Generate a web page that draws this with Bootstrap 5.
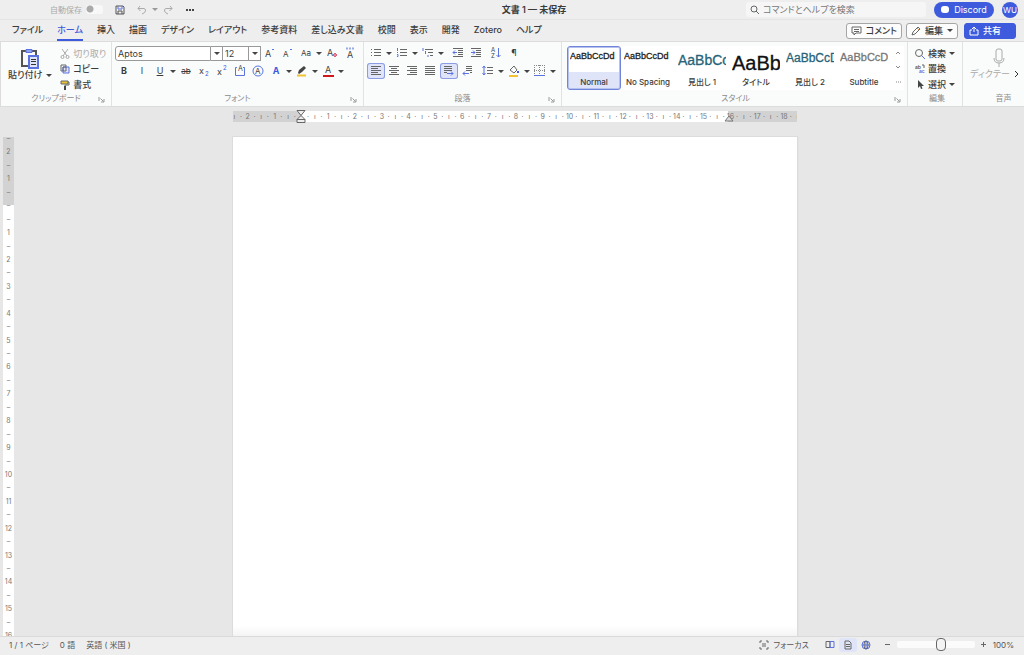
<!DOCTYPE html>
<html lang="ja">
<head>
<meta charset="utf-8">
<meta name="viewport" content="width=device-width, initial-scale=1">
<title>文書 1 — 未保存</title>
<link href="https://cdn.jsdelivr.net/npm/bootstrap@5.3.0/dist/css/bootstrap.min.css" rel="stylesheet">
<style>
:root { --accent:#3d5bdc; --ink:#3b3b3b; --soft:#8b8b8b; --tint:#dfe4f8; }
body { font-family:Inter,"Noto Sans CJK JP",sans-serif; font-size:9px; line-height:12px; font-feature-settings:"palt"; color:var(--ink); background:#eee; }
button { font:inherit; font-feature-settings:inherit; color:inherit; background:none; border:0; padding:0; white-space:nowrap; }
svg { fill:none; stroke:#666; stroke-width:1; flex:none; display:block; }
svg text { stroke:none; fill:#444; }
.b { stroke:#5a73e0; } .fb { fill:var(--accent)!important; stroke:none; } .fk { fill:#444; stroke:none; }
.faded { color:#aaa; } .faded svg { stroke:#aaa; }
.titlebar { height:20px; padding:0 6px 0 50px; border-bottom:1px solid #e4e4e4; }
.side { flex:1 1 0; min-width:0; }
.small-text { font-size:8px; }
.auto-switch.form-check-input { width:17px; height:9px; margin:0; border:0; background-color:#f8f8f8; background-image:radial-gradient(circle at 4px 4px,#aaa 3px,transparent 4px); }
.search-box { width:180px; height:15px; background:#f6f6f6; border-radius:3px; }
.search-box input { border:0; background:none; padding:0; outline:0; width:150px; font:inherit; font-feature-settings:inherit; height:12px; }
.search-box input::placeholder { color:#777; opacity:1; }
.pill { width:60px; height:16px; border-radius:8px; background:var(--accent); color:#fff; }
.avatar { width:16px; height:16px; border-radius:50%; background:var(--accent); color:#fff; font-size:8px; }
.tabrow { height:21px; padding:0 8px 0 12px; }
.tabrow .tabs { gap:14px; }
.tabrow .tabs a { color:var(--ink); text-decoration:none; white-space:nowrap; padding:4px 0 3px; border-bottom:2px solid transparent; font-weight:500; }
.tabrow .tabs a.active { color:var(--accent); border-color:var(--accent); }
.action { height:16px; border:1px solid #a5a5a5; border-radius:3px; background:#fcfcfc; font-weight:500; }
.action.share { background:var(--accent); border-color:var(--accent); color:#fff; width:52px; margin-left:2px; }
.action.share svg { stroke:#fff; }
.ribbon { height:66px; background:#fafbfb; border:1px solid #dcdcdc; border-width:1px 0 1px 1px; }
.group { border-right:1px solid #e2e2e2; padding:2px 3px 0; position:relative; display:flex; flex-direction:column; flex:none; }
.group .foot { margin-top:auto; height:14px; text-align:center; font-size:8px; color:var(--soft); padding-bottom:2px; }
.launch { position:absolute; right:6px; bottom:3px; }
.rows { padding-top:2px; }
.rows button { gap:3px; }
.tool { width:18px; height:16px; display:flex; align-items:center; justify-content:center; border-radius:3px; flex:none; }
.tool.on { background:var(--tint); box-shadow:inset 0 0 0 1px #8b9be4; }
.caret { width:8px; height:16px; display:flex; align-items:center; justify-content:center; flex:none; }
.caret::before, .tri::after { content:""; border:3px solid transparent; border-top:3px solid #444; border-bottom:0; }
.toolrow { height:18px; display:flex; align-items:center; }
.field { height:15px; border:1px solid #999; border-radius:3px 0 0 3px; background:#fff; padding:0 2px; font:inherit; color:inherit; outline:0; }
.field + .caret { height:15px; width:12px; border:1px solid #999; border-left:0; background:#fff; }
.gallery { background:#fff; height:44px; margin-top:2px; }
.style-item { width:54px; height:44px; border-radius:3px; padding:2px 2px 0; display:flex; flex-direction:column; overflow:hidden; font-size:8px; border:1px solid transparent; }
.style-item > span { width:100%; flex:none; }
.style-item .sample { font-family:"Liberation Sans",sans-serif; text-align:left; overflow:hidden; height:27px; line-height:14px; font-size:9px; color:#222; -webkit-text-stroke:.3px currentColor; }
.style-item .s14 { font-size:14px; line-height:22px; color:#276479; } .style-item .s20 { font-size:20px; line-height:29px; color:#111; }
.style-item .s12 { font-size:12px; line-height:18px; color:#276479; } .style-item .s11 { font-size:11px; line-height:17px; color:#777; }
.style-item.on { border:1px solid #7184dc; background:linear-gradient(#fff 25px,var(--tint) 25px); box-shadow:0 0 0 1px #b7c1ee inset; }
.work { background:#e7e7e7; min-height:0; flex:1 1 0; }
.hruler { width:564px; height:11px; overflow:hidden; font-size:7px; line-height:11px; color:#777; background:linear-gradient(90deg,#d2d2d2 68px,#fff 68px 495px,#d2d2d2 495px); }
.hruler .ticks { margin:0 -4px 0 -2px; }
.hruler .ticks span { flex:1 1 0; width:0; display:flex; justify-content:center; }
.ruler-mark { position:absolute; top:-1px; }
.vruler { width:11px; margin:30px 0 0 3px; overflow:hidden; font-size:7px; background:linear-gradient(#d2d2d2 68px,#fff 68px); color:#777; }
.vruler .ticks { height:806px; margin-top:-5px; }
.vruler .ticks span { flex:1 1 0; min-height:0; text-align:center; line-height:13px; }
.sheet { width:564px; background:linear-gradient(transparent calc(100% - 10px),#f4f4f4),#fff; box-shadow:0 0 0 1px #dcdcdc,1px 0 1px #ccc; }
.status { height:19px; font-size:8px; padding:0 10px 3px 9px; border-top:1px solid #dadada; color:#555; }
.status .tool { height:14px; }
.zoom-range { appearance:none; width:78px; height:14px; background:none; margin:0; }
.zoom-range::-webkit-slider-runnable-track { height:7px; background:#fbfbfb; border-radius:2px; }
.zoom-range::-webkit-slider-thumb { appearance:none; width:10px; height:13px; margin-top:-3px; border:1px solid #666; border-radius:4px; background:#f4f4f4; }
</style>
</head>
<body>
<div class="d-flex flex-column vh-100 overflow-hidden">

<header class="titlebar d-flex align-items-center flex-shrink-0">
  <div class="side d-flex align-items-center faded">
    <label for="autosave" class="small-text">自動保存</label>
    <input id="autosave" type="checkbox" role="switch" class="form-check-input auto-switch ms-1">
    <button class="tool ms-2" aria-label="保存"><svg width="10" height="10" viewBox="0 0 10 10" style="stroke:#555"><path d="M1 1h7l1 1v7H1z"/><path class="b" d="M3 1v3h4V1"/><path d="M3 9V6h4v3"/></svg></button>
    <button class="tool ms-1" aria-label="元に戻す"><svg width="10" height="10" viewBox="0 0 10 10"><path d="M3 1L1 3.500L3.500 6M1 3.500H7Q9 4 8.500 6T5 9"/></svg></button>
    <button class="caret opacity-50" aria-label="履歴"></button>
    <button class="tool" aria-label="やり直し"><svg width="10" height="10" viewBox="0 0 10 10"><path d="M7 1l2 2.500L6.500 6M9 3.500H3Q1 4 1.500 6T5 9"/></svg></button>
    <button class="tool ms-1" aria-label="その他"><svg width="10" height="4"><path class="fk" d="M1 1h2v2H1zM4 1h2v2H4zM7 1h2v2H7z"/></svg></button>
  </div>
  <div class="fw-semibold text-nowrap">文書 1 — 未保存</div>
  <div class="side d-flex align-items-center justify-content-end gap-2">
    <div class="search-box d-flex align-items-center">
      <svg class="mx-1" width="9" height="9"><circle cx="4" cy="4" r="3"/><path d="M6 6l3 3"/></svg>
      <input type="search" aria-label="検索" placeholder="コマンドとヘルプを検索">
    </div>
    <button class="pill d-flex align-items-center justify-content-center gap-1"><svg width="9" height="9"><rect x="0" y="1" width="8" height="7" rx="3" style="fill:#fff;stroke:none"/></svg>Discord</button>
    <button class="avatar">WU</button>
  </div>
</header>

<div class="tabrow d-flex align-items-center justify-content-between flex-shrink-0">
  <nav class="tabs d-flex">
    <a href="#">ファイル</a><a href="#" class="active">ホーム</a><a href="#">挿入</a><a href="#">描画</a><a href="#">デザイン</a><a href="#">レイアウト</a><a href="#">参考資料</a><a href="#">差し込み文書</a><a href="#">校閲</a><a href="#">表示</a><a href="#">開発</a><a href="#">Zotero</a><a href="#">ヘルプ</a>
  </nav>
  <div class="d-flex gap-1">
    <button class="action px-1 d-flex align-items-center gap-1"><svg width="11" height="10"><path d="M1 1h9v6H5L3 9V7H1zM3 3.500h5M3 5.500h5"/></svg>コメント</button>
    <button class="action tri px-1 d-flex align-items-center gap-1"><svg width="10" height="10"><path d="M1 9l1-3 5-5 2 2-5 5z"/><path d="M6 2l2 2" stroke="#e0a040"/></svg>編集</button>
    <button class="action share px-1 d-flex align-items-center gap-1"><svg width="10" height="10"><path d="M3 4H1v5h8V4H7M5 6V1M3 3l2-2 2 2"/></svg>共有</button>
  </div>
</div>

<main class="ribbon d-flex overflow-hidden flex-shrink-0">
  <section class="group" style="width:111px">
    <div class="d-flex">
      <button class="d-flex flex-column align-items-center ms-1 me-2 pt-1 fw-medium">
        <svg width="20" height="21" viewBox="0 0 20 21"><path d="M6 3H2v15h6M12 3h4v4" stroke-width="2" stroke="#555"/><path class="b" d="M6 1.500h6v3H6z" fill="#8fa3ee"/><path class="b" d="M9 8h9v12H9z" fill="#dfe4f8" stroke-width="2"/><path d="M11 11.500h5M11 13.500h5M11 16.500h5" stroke="#333"/></svg>
        <span class="tri d-flex align-items-center gap-1">貼り付け</span></button>
      <div class="d-flex flex-column rows">
        <button class="faded d-flex align-items-center" style="height:15px"><svg width="10" height="10"><circle cx="2.500" cy="8" r="1.500"/><circle cx="7.500" cy="8" r="1.500"/><path d="M3 7l5-7M7 7L2 0"/></svg>切り取り</button>
        <button class="d-flex align-items-center fw-medium" style="height:16px"><svg width="10" height="10"><path d="M3 7H1V1h5v2"/><path class="b" d="M3 3h6v6H3z" fill="#dfe4f8"/><path d="M3 3h3v4H3z"/></svg>コピー</button>
        <button class="d-flex align-items-center fw-medium" style="height:15px"><svg width="10" height="10"><path d="M1 1h7v3H1z" fill="#e7c535"/><path d="M8 2h1v3H5v1"/><path class="fk" d="M4 6h2v4H4z"/></svg>書式</button>
      </div>
    </div>
    <div class="foot">クリップボード</div><button class="launch" aria-label="クリップボードの設定"><svg width="7" height="7"><path d="M1 5V1M2.500 2.500l3 3M6 3v3H3" stroke="#999"/></svg></button>
  </section>

  <section class="group" style="width:252px">
    <div class="toolrow">
      <input class="field" style="width:96px" aria-label="フォント" value="Aptos"><button class="caret" aria-label="フォント一覧"></button>
      <input class="field rounded-0 border-start-0" style="width:26px" aria-label="サイズ" value="12"><button class="caret" aria-label="サイズ一覧"></button>
      <button class="tool" aria-label="拡大"><svg width="12" height="12"><text x="1" y="10" font-size="9">A</text><path class="b" d="M8 3l1-1 1 1"/></svg></button>
      <button class="tool" aria-label="縮小"><svg width="12" height="12"><text x="1" y="10" font-size="8">A</text><path class="b" d="M8 2l1 1 1-1"/></svg></button>
      <button class="tool small-text">Aa</button><button class="caret" aria-label="文字種"></button>
      <button class="tool" aria-label="書式のクリア"><svg width="12" height="12"><text x="1" y="9" font-size="9">A</text><path d="M7 8l2-2 2 2-2 2z" style="fill:#e78798;stroke:#d86078"/></svg></button>
      <button class="tool" aria-label="ルビ"><svg width="12" height="12"><path class="b" d="M2 1.500h8" stroke-width="2" stroke-dasharray="2 1" stroke-opacity=".6"/><text x="3" y="11" font-size="9">A</text></svg></button>
    </div>
    <div class="toolrow">
      <button class="tool fw-bold">B</button><button class="tool">I</button><button class="tool text-decoration-underline">U</button><button class="caret" aria-label="下線"></button>
      <button class="tool text-decoration-line-through small-text">ab</button>
      <button class="tool" aria-label="下付き"><svg width="12" height="12"><text x="1" y="9" font-size="9">x</text><text class="fb" x="7" y="11" font-size="6">2</text></svg></button>
      <button class="tool" aria-label="上付き"><svg width="12" height="12"><text x="1" y="10" font-size="9">x</text><text class="fb" x="7" y="5" font-size="6">2</text></svg></button>
      <button class="tool" aria-label="囲み線"><svg width="12" height="12"><path class="b" d="M3 2.500H1.500v8h9v-8H9"/><text x="4" y="6" font-size="7">A</text></svg></button>
      <button class="tool" aria-label="囲い文字"><svg width="12" height="12"><circle class="b" cx="6" cy="6" r="5"/><text x="3" y="9" font-size="8">A</text></svg></button>
      <button class="tool fw-bold" style="color:var(--accent)">A</button><button class="caret" aria-label="文字の効果"></button>
      <button class="tool" aria-label="蛍光ペン"><svg width="12" height="12"><path class="fk" d="M2 8l1-3 5-4 2 2-4 4-3 2z"/><path d="M1 10.500h9" stroke="#f1c232" stroke-width="2"/></svg></button><button class="caret" aria-label="蛍光ペンの色"></button>
      <button class="tool" aria-label="フォントの色"><svg width="12" height="12"><text x="3" y="8" font-size="9">A</text><path d="M1 11h11" stroke="#d01818" stroke-width="2"/></svg></button><button class="caret" aria-label="色"></button>
    </div>
    <div class="foot">フォント</div><button class="launch" aria-label="フォントの設定"><svg width="7" height="7"><path d="M1 5V1M2.500 2.500l3 3M6 3v3H3" stroke="#999"/></svg></button>
  </section>

  <section class="group" style="width:198px">
    <div class="toolrow">
      <button class="tool" aria-label="箇条書き"><svg width="12" height="10"><path d="M4 1.500h7M4 4.500h7M4 7.500h7"/><path d="M1 1.500h1M1 4.500h1M1 7.500h1"/></svg></button><button class="caret" aria-label="行頭文字"></button>
      <button class="tool" aria-label="段落番号"><svg width="12" height="10"><path d="M4 1.500h7M4 4.500h7M4 7.500h7"/><path class="b" d="M1.500 0v3M1 4.500h1M1 6.500h1v2H1"/></svg></button><button class="caret" aria-label="番号の形式"></button>
      <button class="tool" aria-label="アウトライン"><svg width="12" height="10"><path d="M3 1.500h8M6 4.500h5M8 7.500h3"/><path class="b" d="M1 0v3M3.500 3v3M6 7v2"/></svg></button><button class="caret" aria-label="リスト"></button>
      <button class="tool ms-1" aria-label="インデントを減らす"><svg width="12" height="10"><path d="M1 .5h10M6 2.500h5M6 4.500h5M6 6.500h5M1 8.500h10"/><path class="b" d="M5 4.500H1M3 2.500l-2 2 2 2"/></svg></button>
      <button class="tool" aria-label="インデントを増やす"><svg width="12" height="10"><path d="M1 .5h10M6 2.500h5M6 4.500h5M6 6.500h5M1 8.500h10"/><path class="b" d="M1 4.500h4M3 2.500l2 2-2 2"/></svg></button>
      <button class="tool" style="margin-left:2px" aria-label="並べ替え"><svg width="12" height="12"><text x="1" y="5" font-size="6">A</text><text x="1" y="11" font-size="6">Z</text><path class="b" d="M8.500 1v9M6.500 8l2 2 2-2"/></svg></button>
      <button class="tool">¶</button>
    </div>
    <div class="toolrow">
      <button class="tool on" aria-label="左揃え"><svg width="10" height="10"><path d="M0 .5h10M0 2.500h7M0 4.500h10M0 6.500h7M0 8.500h10"/></svg></button>
      <button class="tool" aria-label="中央揃え"><svg width="10" height="10"><path d="M0 .5h10M2 2.500h6M0 4.500h10M2 6.500h6M0 8.500h10"/></svg></button>
      <button class="tool" aria-label="右揃え"><svg width="10" height="10"><path d="M0 .5h10M3 2.500h7M0 4.500h10M3 6.500h7M0 8.500h10"/></svg></button>
      <button class="tool" aria-label="両端揃え"><svg width="10" height="10"><path d="M0 .5h10M0 2.500h10M0 4.500h10M0 6.500h10M0 8.500h10"/></svg></button>
      <button class="tool on" style="margin-left:1px" aria-label="左から右"><svg width="12" height="12"><path d="M1 1.500h8M1 3.500h8M1 5.500h8M1 7.500h3"/><path class="b" d="M4 8.500h6M8 6.500l2 2-2 2"/></svg></button>
      <button class="tool" style="margin-left:1px" aria-label="右から左"><svg width="12" height="12"><path d="M4 1.500h6M4 3.500h6M4 5.500h6M8 7.500h2"/><path class="b" d="M7 8.500H1M3 6.500l-2 2 2 2"/></svg></button>
      <button class="tool" style="margin-left:2px" aria-label="行間"><svg width="12" height="12"><path d="M5 2.500h6M5 5.500h6M5 8.500h6"/><path class="b" d="M2 1v9M.5 3L2 1l1.500 2M.5 8L2 10l1.500-2"/></svg></button><button class="caret" aria-label="行間の設定"></button>
      <button class="tool" aria-label="塗りつぶし"><svg width="12" height="12"><path d="M2 5l4-4 3 4-3 3z"/><path class="fb" d="M9 6h2v2H9z"/><path d="M1 11h9" stroke="#f1c232" stroke-width="2"/></svg></button><button class="caret" aria-label="塗りつぶしの色"></button>
      <button class="tool" aria-label="罫線"><svg width="12" height="12"><path d="M.5 0v10M5.500 0v10M10.500 0v10M0 .5h11M0 5.500h11" stroke-dasharray="1 1" stroke="#888"/><path class="b" d="M0 10.500h11"/></svg></button><button class="caret" aria-label="罫線の種類"></button>
    </div>
    <div class="foot">段落</div><button class="launch" aria-label="段落の設定"><svg width="7" height="7"><path d="M1 5V1M2.500 2.500l3 3M6 3v3H3" stroke="#999"/></svg></button>
  </section>

  <section class="group" style="width:346px;padding-left:5px">
    <div class="gallery d-flex">
      <button class="style-item on"><span class="sample">AaBbCcDd</span><span class="fw-medium">Normal</span></button>
      <button class="style-item"><span class="sample">AaBbCcDd</span><span class="fw-medium">No Spacing</span></button>
      <button class="style-item"><span class="sample s14">AaBbCc</span><span class="fw-medium">見出し 1</span></button>
      <button class="style-item"><span class="sample s20">AaBb</span><span class="fw-medium">タイトル</span></button>
      <button class="style-item"><span class="sample s12">AaBbCcD</span><span class="fw-medium">見出し 2</span></button>
      <button class="style-item"><span class="sample s11">AaBbCcD</span><span class="fw-medium">Subtitle</span></button>
      <button class="d-flex flex-fill justify-content-center pt-1" aria-label="その他のスタイル"><svg width="8" height="36"><path d="M2 4l2-2 2 2M2 16l2 2 2-2M2 32h1M4 32h1M6 32h1" stroke="#888"/></svg></button>
    </div>
    <div class="foot">スタイル</div><button class="launch" aria-label="スタイルの設定"><svg width="7" height="7"><path d="M1 5V1M2.500 2.500l3 3M6 3v3H3" stroke="#999"/></svg></button>
  </section>

  <section class="group" style="width:55px;padding-left:7px">
    <div class="rows d-flex flex-column">
    <button class="tri d-flex align-items-center fw-medium" style="height:15px"><svg width="10" height="10"><circle cx="4" cy="4" r="3.500"/><path class="b" d="M6.500 6.500L10 10"/></svg>検索</button>
    <button class="d-flex align-items-center fw-medium" style="height:16px"><svg width="10" height="10"><text x="0" y="5" font-size="5">ab</text><path d="M7 1h2v3"/><text class="fb" x="4" y="9" font-size="5">ac</text></svg>置換</button>
    <button class="tri d-flex align-items-center fw-medium" style="height:15px"><svg width="10" height="10"><path class="fk" d="M3 0v8l2-2 1 3 1.500-.5L6.500 6H9z"/></svg>選択</button>
    </div>
    <div class="foot">編集</div>
  </section>

  <section class="group flex-fill border-0" style="padding-left:7px">
    <button class="faded d-flex flex-column align-items-start pt-1"><svg style="margin-left:22px" width="14" height="20"><rect x="4" y="1" width="6" height="12" rx="2"/><path d="M2 10q0 5 5 5t5-5M7 15v4"/></svg>
    <span class="d-flex align-items-center gap-1">ディクテー<svg width="5" height="8"><path d="M1 1l3 3-3 3" style="stroke:#333"/></svg></span></button>
    <div class="foot ps-3">音声</div>
  </section>
</main>

<div class="work d-flex">
  <div class="vruler"><div class="ticks d-flex flex-column" id="vticks"></div></div>
  <div class="flex-fill d-flex flex-column align-items-center pe-2">
    <div class="position-relative" style="margin:4px 0 15px">
      <div class="hruler"><div class="ticks d-flex" id="hticks"></div></div>
      <svg class="ruler-mark" style="left:63px" width="10" height="13"><path d="M1 .5h8L5 5.500zM5 5.500l4 4H1zM1 9.500h8v3H1z" fill="#eee" stroke="#666"/></svg>
      <svg class="ruler-mark" style="left:491px" width="10" height="13"><path d="M5 6l4 5H1z" fill="#ddd" stroke="#777"/></svg>
    </div>
    <div class="sheet flex-fill" contenteditable="true" role="textbox" aria-label="文書"></div>
  </div>
</div>

<footer class="status d-flex align-items-center justify-content-between flex-shrink-0">
  <div class="d-flex" style="gap:11px"><span>1 / 1 ページ</span><span>0 語</span><span>英語 ( 米国 )</span></div>
  <div class="d-flex align-items-center">
    <button class="d-flex align-items-center gap-1 me-2"><svg width="10" height="10"><path d="M1 3V1h2M7 1h2v2M9 7v2H7M3 9H1V7M3 4h4M3 6h4"/></svg>フォーカス</button>
    <button class="tool ms-1" aria-label="閲覧"><svg width="10" height="9"><path d="M1 1.500h4v6H1z"/><path class="b" d="M5 1.500h4v6H5z"/></svg></button>
    <button class="tool" style="background:var(--tint)" aria-label="印刷レイアウト"><svg width="8" height="10"><path d="M1 1h4l2 2v6H1zM2 4.500h4M2 6.500h4"/></svg></button>
    <button class="tool me-1" aria-label="Web"><svg width="10" height="10"><circle class="b" cx="5" cy="5" r="4"/><path class="b" d="M1 5h8M5 1v8"/><ellipse cx="5" cy="5" rx="2" ry="4"/></svg></button>
    <button class="tool" aria-label="縮小"><svg width="7" height="7"><path d="M1 3.500h5"/></svg></button>
    <input type="range" class="zoom-range" aria-label="ズーム" min="0" max="100" value="58">
    <button class="tool" aria-label="拡大"><svg width="7" height="7"><path d="M1 3.500h5M3.500 1v5"/></svg></button>
    <span>100%</span>
  </div>
</footer>
</div>
<script>
// Ruler scales: the origin sits 2.5 cm into the page
const h = document.getElementById('hticks'), v = document.getElementById('vticks');
const tick = (box, t) => { const s = document.createElement('span'); s.textContent = t; box.append(s); };
for (let q = -10; q <= 74; q++) tick(h, q === 0 ? '' : q % 4 === 0 ? Math.abs(q / 4) : q % 2 === 0 ? 'ı' : '·');
for (let q = -5; q < 55; q++) tick(v, q === 0 || q % 2 ? '–' : Math.abs(q / 2));
</script>
<script src="https://cdn.jsdelivr.net/npm/bootstrap@5.3.0/dist/js/bootstrap.bundle.min.js"></script>
</body>
</html>
